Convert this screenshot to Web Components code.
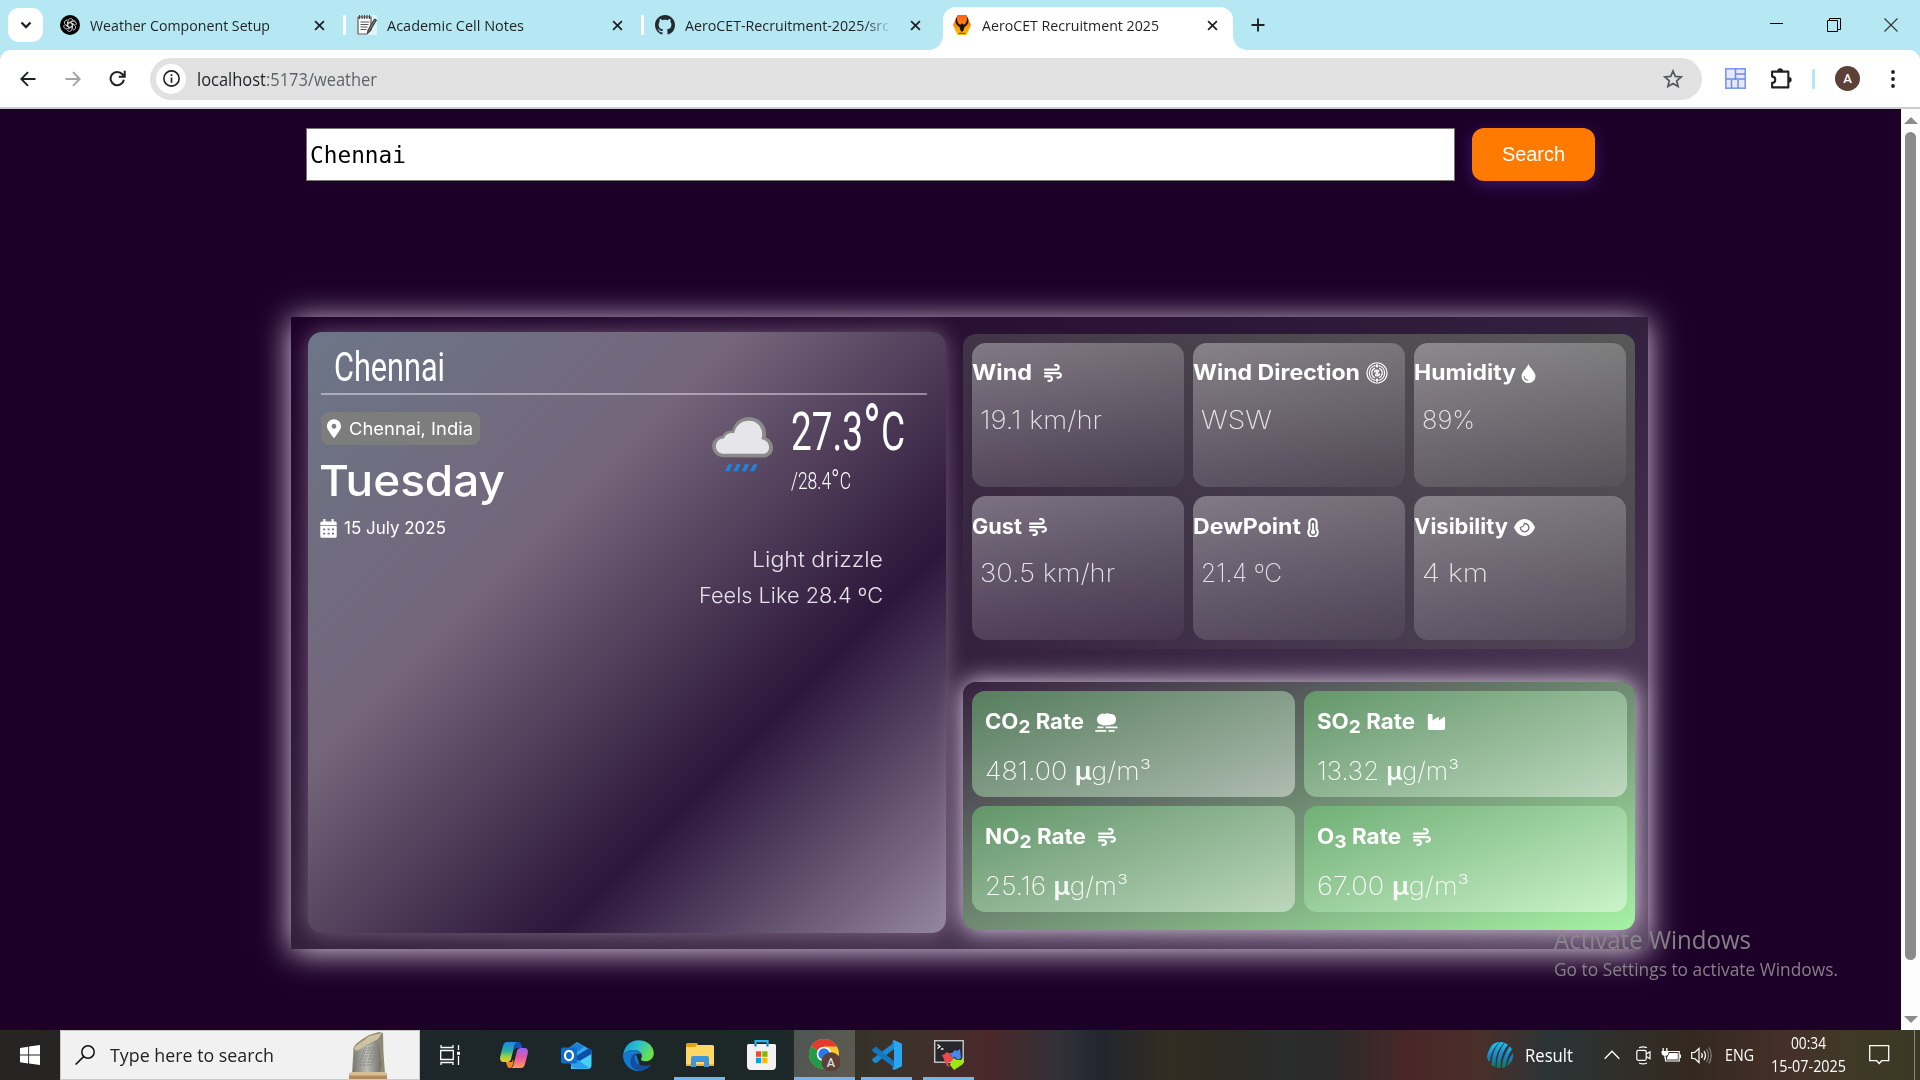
<!DOCTYPE html>
<html lang="en">
<head>
<meta charset="utf-8">
<title>AeroCET Recruitment 2025</title>
<style>
html,body{margin:0;width:1920px;height:1080px;overflow:hidden}
</style>
</head>
<body>
<desk-top></desk-top>
<script>
const WIND='<svg viewBox="0 0 512 512"><path fill="currentColor" d="M288 32c0 17.700 14.300 32 32 32h32c17.700 0 32 14.300 32 32s-14.300 32-32 32H32c-17.700 0-32 14.300-32 32s14.300 32 32 32H352c53 0 96-43 96-96s-43-96-96-96H320c-17.700 0-32 14.300-32 32zm64 352c0 17.700 14.300 32 32 32h32c53 0 96-43 96-96s-43-96-96-96H32c-17.700 0-32 14.300-32 32s14.300 32 32 32H416c17.700 0 32 14.300 32 32s-14.300 32-32 32H384c-17.700 0-32 14.300-32 32zM128 512h32c53 0 96-43 96-96s-43-96-96-96H32c-17.700 0-32 14.300-32 32s14.300 32 32 32H160c17.700 0 32 14.300 32 32s-14.300 32-32 32H128c-17.700 0-32 14.300-32 32s14.300 32 32 32z"/></svg>';
const ICONS={
wind:WIND,
x:'<svg viewBox="0 0 10 10"><path d="M1 1l8 8M9 1l-8 8" stroke="#1f2224" stroke-width="1.600"/></svg>',
plus:'<svg viewBox="0 0 14 14"><path d="M7 .5v13M.5 7h13" stroke="#1f2224" stroke-width="1.900"/></svg>',
chev:'<svg viewBox="0 0 12 8"><path d="M1.500 1.500L6 6l4.500-4.500" fill="none" stroke="#1f2224" stroke-width="2.300"/></svg>',
gpt:'<svg viewBox="0 0 20 20"><circle cx="10" cy="10" r="10" fill="#000"/><g fill="none" stroke="#e8e8e8" stroke-width=".8"><path d="M8 10.800V6.200a2.600 2.600 0 0 1 5-1M8 8.200l3.800-2.200a2.600 2.600 0 0 1 3.600 1"/><path d="M8 10.800V6.200a2.600 2.600 0 0 1 5-1M8 8.200l3.800-2.200" transform="rotate(60 10 10)"/><path d="M8 10.800V6.200a2.600 2.600 0 0 1 5-1M8 8.200l3.800-2.200" transform="rotate(120 10 10)"/><path d="M8 10.800V6.200a2.600 2.600 0 0 1 5-1M8 8.200l3.800-2.200" transform="rotate(180 10 10)"/><path d="M8 10.800V6.200a2.600 2.600 0 0 1 5-1M8 8.200l3.800-2.200" transform="rotate(240 10 10)"/><path d="M8 10.800V6.200a2.600 2.600 0 0 1 5-1M8 8.200l3.800-2.200" transform="rotate(300 10 10)"/></g></svg>',
note:'<svg viewBox="0 0 20 20"><rect width="20" height="20" fill="#fff" opacity=".55"/><path d="M1 2h13v13l-4 4H1z" fill="#fff" stroke="#555" stroke-width="1.200"/><path d="M2.500 0v4M5 0v4M7.500 0v4M10 0v4M12.500 0v4" stroke="#444" stroke-width="1.200"/><path d="M3.500 7h9M3.500 9.500h8M3.500 12h7M3.500 14.500h6" stroke="#555" stroke-width="1.200"/><path d="M17.500 4l2 1-6.500 11-2.500 2 .5-3z" fill="#777" stroke="#222" stroke-width=".9"/></svg>',
github:'<svg viewBox="0 0 16 16"><path fill="#24292f" d="M8 0C3.580 0 0 3.580 0 8c0 3.540 2.290 6.530 5.470 7.590.4.070.55-.17.55-.38 0-.19-.01-.82-.01-1.490-2.010.37-2.530-.49-2.690-.94-.09-.23-.48-.94-.82-1.130-.28-.15-.68-.52-.01-.53.63-.01 1.080.58 1.230.82.72 1.210 1.870.87 2.330.66.070-.52.280-.87.510-1.070-1.780-.2-3.640-.89-3.640-3.950 0-.87.310-1.590.82-2.150-.08-.2-.36-1.020.08-2.120 0 0 .67-.21 2.200.82.64-.18 1.320-.27 2-.27s1.360.09 2 .27c1.530-1.040 2.200-.82 2.200-.82.44 1.100.16 1.920.08 2.120.51.56.82 1.270.82 2.150 0 3.070-1.870 3.750-3.650 3.950.29.25.54.73.54 1.480 0 1.070-.01 1.930-.01 2.200 0 .21.15.46.55.38A8.010 8.010 0 0 0 16 8c0-4.420-3.580-8-8-8z"/></svg>',
aero:'<svg viewBox="0 0 18 20"><defs><linearGradient id="a" x2="0" y2="1"><stop stop-color="#ff5a12"/><stop offset="1" stop-color="#ffc400"/></linearGradient></defs><path d="M4.500 0h9L18 10l-4.500 10h-9L0 10z" fill="url(#a)"/><path d="M4 2C1.500 5 2.500 10 6.500 12L7.500 15.500 9 17l1.500-1.500 1-3.500c4-2 5-7 2.500-10 .3 3-.5 5.500-2.500 7.500L10.200 9.500 9 8 7.800 9.500 6.500 9.500C4.500 7.500 3.700 5 4 2z" fill="#1c1208"/><path d="M5.500 18.300h7" stroke="#5b3a00" stroke-width=".9"/></svg>',
min:'<svg viewBox="0 0 14 14"><path d="M0 5.500h13" stroke="#000" stroke-width="1"/></svg>',
restore:'<svg viewBox="0 0 14 14"><path d="M.5 2.500h10v11H.5zM2.500 2.500v-2h11v11h-3" fill="none" stroke="#000"/></svg>',
close:'<svg viewBox="0 0 14 14"><path d="M.5 .5l13 13M13.500 .5l-13 13" stroke="#333" stroke-width="1.100"/></svg>',
back:'<svg viewBox="0 0 16 16"><path d="M15.500 8H1.500M8 1.200L1.300 8 8 14.800" fill="none" stroke="#1f2224" stroke-width="1.900"/></svg>',
fwd:'<svg viewBox="0 0 16 16"><path d="M.5 8h14M8 1.200L14.700 8 8 14.800" fill="none" stroke="#a3a4a5" stroke-width="1.900"/></svg>',
reload:'<svg viewBox="0 0 16 16"><path d="M14 9.200A6.300 6.300 0 1 1 12.600 4L14.500 6M14.800 .7v5.600H9.200" fill="none" stroke="#1f2224" stroke-width="1.900"/></svg>',
info:'<svg viewBox="0 0 16 16"><circle cx="8" cy="8" r="7.200" fill="none" stroke="#1f2224" stroke-width="1.500"/><path d="M8 7v5M8 4v1.700" stroke="#1f2224" stroke-width="1.600"/></svg>',
star:'<svg viewBox="0 0 20 20"><path d="M10 2l2.300 5.400 5.900.5-4.500 3.900 1.400 5.700L10 14.500l-5.100 3 1.400-5.700L1.800 7.900l5.900-.5z" fill="none" stroke="#55585b" stroke-width="1.700"/></svg>',
grid:'<svg viewBox="0 0 21 21"><rect x=".8" y=".8" width="19.400" height="19.400" fill="#e6e9f8" stroke="#7f97ea" stroke-width="1.600"/><path d="M10.500 1v11M1 11h19M11 6h9M6.500 12v8M13 12v8" stroke="#6f89e4" stroke-width="1.500" fill="none"/></svg>',
puzzle:'<svg viewBox="0 0 21 21"><path d="M2 3.500h15.500v15H2v-4.300c1.800 0 3-1.300 3-3s-1.200-3-3-3z" fill="none" stroke="#1f2224" stroke-width="2" stroke-linejoin="round"/><path d="M7 3a2.700 2.700 0 0 1 5.400 0zM18 8.500a2.700 2.700 0 0 1 0 5.400z" fill="#1f2224"/></svg>',
dots:'<svg viewBox="0 0 4 18"><g fill="#1f2224"><circle cx="2" cy="2" r="1.900"/><circle cx="2" cy="9" r="1.900"/><circle cx="2" cy="16" r="1.900"/></g></svg>',
pin:'<svg viewBox="0 0 384 512"><path fill="#fff" d="M172.268 501.670C26.970 291.031 0 269.413 0 192 0 85.961 85.961 0 192 0s192 85.961 192 192c0 77.413-26.970 99.031-172.268 309.670-9.535 13.774-29.930 13.773-39.464 0zM192 262c38 0 66-30 66-68s-28-66-66-66-66 28-66 66 28 68 66 68z"/></svg>',
cal:'<svg viewBox="0 0 18 20"><path fill="#fff" d="M3.500 0h2.300v2.500h6.400V0h2.300v2.500H16a1.700 1.700 0 0 1 1.700 1.700v2H.3v-2A1.700 1.700 0 0 1 2 2.500h1.500zM.3 7.200h17.400v11A1.700 1.700 0 0 1 16 19.900H2a1.700 1.700 0 0 1-1.700-1.700z"/><g fill="#706b7e"><path d="M3.400 10h2.100v1.900H3.400zM8 10h2.100v1.900H8zM12.600 10h2.100v1.900h-2.100zM3.400 14.500h2.100v1.900H3.400zM8 14.500h2.100v1.900H8zM12.600 14.500h2.100v1.900h-2.100z"/></g></svg>',
cloud:'<svg viewBox="0 0 64 58"><path d="M14 42.500C6 42.500 1.200 37 1.200 31S6 21.500 11.500 20.500C14 16 18 15.500 21.500 15 24 7 30 1.500 38.500 1.500 49 1.500 56 9.500 56 19c0 1.500-.2 2-.4 3C60 24.500 63 28 63 33c0 5.500-4.500 9.800-10.500 9.800z" fill="#8b8b8b"/><path d="M14 39C8 39 5 35.500 5 31.500c0-4.500 3.500-8 8-8 2-4.500 6-6 10.500-5.500C25.500 10 31 5.500 38.500 5.500c8.500 0 13.500 6.500 13.500 14 0 2-.3 3.300-.8 4.600 5.300.9 7.800 4.400 7.800 8.400 0 4.300-3 6.500-7.500 6.500z" fill="#e6e6ea"/><path d="M17.500 49.500h4.200l-3.200 7.200h-4.200zM26 49.500h4.200L27 56.700h-4.200zM34.500 49.500h4.200l-3.200 7.200h-4.200zM43 49.500h4.200L44 56.700h-4.200z" fill="#1e84e0"/></svg>',
maze:'<svg viewBox="0 0 22 22"><g fill="none" stroke="#fff" stroke-width="1.250"><path d="M12.300 .9a10.200 10.200 0 0 1 0 20.200M9.700 21.100a10.200 10.200 0 0 1 0-20.200M12.600 3.500a7.700 7.700 0 0 1 0 15M9.400 18.500a7.700 7.700 0 0 1 0-15M13 6.200a5.200 5.200 0 0 1 0 9.600M9 15.800a5.200 5.200 0 0 1 0-9.600M8.300 10.500c0-2.500 3-3.200 4.500-1.500L9.300 12.800M13.700 11.500c0 2.500-3 3.200-4.500 1.500M9.500 10.500L11 9M12.500 11.500L11 13"/></g><circle cx="11" cy="4.300" r="1.300" fill="#fff"/><circle cx="11" cy="17.700" r="1.300" fill="#fff"/><path d="M10.400 0h1.200v4h-1.200zM10.400 18h1.200v4h-1.200z" fill="#fff"/></svg>',
drop:'<svg viewBox="0 0 15 19"><path d="M7.500 0c1.200 3.800 7 7.800 7 12.200A6.900 6.900 0 0 1 7.500 19a6.900 6.900 0 0 1-7-6.800C.5 7.800 6.300 3.800 7.500 0z" fill="#fff"/><path d="M3.200 12.300c.1 2.200 1.700 3.900 4 4" fill="none" stroke="#777" stroke-width="1.100"/></svg>',
thermo:'<svg viewBox="0 0 12 19"><path d="M2.400 4a3.600 3.600 0 0 1 7.200 0v6.600a4.700 4.700 0 1 1-7.200 0z" fill="none" stroke="#fff" stroke-width="2.200" transform="translate(0 .6)"/><path d="M6 5v8" stroke="#fff" stroke-width="1.800"/><circle cx="6" cy="14" r="2.200" fill="#fff"/></svg>',
eye:'<svg viewBox="0 0 21 17"><path d="M10.500 0C15.500 0 19 4 21 8.500 19 13 15.500 17 10.500 17S2 13 0 8.500C2 4 5.500 0 10.500 0z" fill="#fff"/><path d="M10 4.500A4.200 4.200 0 1 1 6.500 8" fill="none" stroke="#76707a" stroke-width="1.400"/><path d="M10 4.500c.5 2-1 3.700-3.500 3.500" fill="none" stroke="#76707a" stroke-width="1.200"/></svg>',
smog:'<svg viewBox="0 0 23 19"><path d="M6 11.500a5 5 0 0 1-3-8A5 5 0 0 1 9.500 1 6 6 0 0 1 15 1a5 5 0 0 1 6 4.800c.3 3.200-1.800 5.700-4.800 5.700-1 1-2.500 1-3.500.5-2 1-5 .7-6.700-.5z" fill="#fff"/><path d="M2.500 14.300h6M10.500 14.300H22.500M.3 17.800h11M13.500 17.800h6" stroke="#fff" stroke-width="1.700"/></svg>',
factory:'<svg viewBox="0 0 19 17"><path d="M1.500 0h2.800a1 1 0 0 1 1 1v6l5.700-3.800c.5-.3 1 0 1 .6V7l5.400-3.800c.6-.4 1.200 0 1.200.6v11.700a1.500 1.500 0 0 1-1.500 1.500H1.800A1.500 1.500 0 0 1 .3 15.500V1.200C.3.5.8 0 1.500 0z" fill="#fff"/></svg>',
win:'<svg viewBox="0 0 20 20"><path fill="#fff" d="M0 2.900L8.200 1.700v7.900H0zM9.100 1.500L20 0v9.600H9.100zM0 10.500h8.200v7.900L0 17.200zM9.100 10.500H20V20L9.100 18.500z"/></svg>',
mag:'<svg viewBox="0 0 20 20"><circle cx="13" cy="7" r="6.200" fill="none" stroke="#111" stroke-width="1.500"/><path d="M8.600 11.600L.6 19.500" stroke="#111" stroke-width="1.600"/></svg>',
stone:'<svg viewBox="0 0 38 47"><defs><linearGradient id="s" x2="1" y2="0"><stop stop-color="#74746d"/><stop offset=".5" stop-color="#bcbdb8"/><stop offset="1" stop-color="#6e6d66"/></linearGradient></defs><path d="M4.500 16C6 11 14 7 20 3l10-3 4 1 .5 20L36 42H3z" fill="#8f8873"/><path d="M6.500 17c8-1 14-5 20-8l4 5 2 20-1.500 8H3.500z" fill="url(#s)"/><path d="M5 16c4-5 10-7 15-12l13-3-4 6-7 4c-5 2-8 5-15 8z" fill="#cfc2a0"/><path d="M15 16h11M14 18.500h13M13 21h14M12 24h15M11 27h15M10 30h15M10 33h14" stroke="#7b7c76" stroke-width=".7" stroke-dasharray="3 1"/><path d="M0 41.500h38V47H0z" fill="#b18a5c"/><path d="M0 41.500l3-1.500h32l3 1.500v2H0z" fill="#d8bd95"/></svg>',
task:'<svg viewBox="0 0 20 20"><path d="M1 0v2.500h12V0M1 20v-2.500h12V20M.7 5.500h12.600v9H.7zM18.500 0v5M18.500 11v9" fill="none" stroke="#fff" stroke-width="1.300"/><path d="M17 6.800h3v3h-3z" fill="#fff"/></svg>',
copilot:'<svg viewBox="0 0 28 26"><defs><linearGradient id="c1" x2="0" y2="1"><stop stop-color="#1b86e6"/><stop offset=".45" stop-color="#29b29f"/><stop offset=".75" stop-color="#a7cf45"/><stop offset="1" stop-color="#f6c624"/></linearGradient><linearGradient id="c2" x2="0" y2="1"><stop stop-color="#9a62ef"/><stop offset=".5" stop-color="#e9589f"/><stop offset="1" stop-color="#ff9d54"/></linearGradient></defs><path d="M15 0h3.500c2 0 2.800 2 3.300 4l.5 2h-5c-2.500 0-3 1.500-3.500 3.500z" fill="#154fc0"/><path d="M7 0h11c-3 0-3.500 3-4.200 6l-2.500 10c-.7 3-1.800 4-4.300 4H3.500C.5 20-.5 17.500.3 14L3 4c.7-2.500 2-4 4-4z" fill="url(#c1)"/><path d="M21 26H10c3 0 3.500-3 4.200-6l2.500-10c.7-3 1.800-4 4.300-4h3.500c3 0 4 2.500 3.200 6L25 22c-.7 2.500-2 4-4 4z" fill="url(#c2)"/><path d="M6 20h6l1-3 .5 3c-.5 3-1.500 6-4 6-1.800 0-2.500-2-3.500-6z" fill="#f0842b"/></svg>',
outlook:'<svg viewBox="0 0 31 27"><path d="M16 0l13 7.500V12L10 17 5 8z" fill="#35a9ec"/><path d="M5 7.500L16 1l7 4-13 9z" fill="#1b7fd6"/><path d="M10 20L30.500 8v15a4 4 0 0 1-4 4H10z" fill="#48d0f8"/><path d="M9 18L28 6l2.500 2v4L10 24z" fill="#0d4ea8"/><path d="M9 21l8-3 12 8.500H12z" fill="#2b9fe8"/><rect y="5.500" width="16" height="16" rx="2" fill="#0f6cc8"/><ellipse cx="8" cy="13.500" rx="4" ry="4.700" fill="none" stroke="#fff" stroke-width="2.200"/></svg>',
edge:'<svg viewBox="0 0 32 32"><defs><linearGradient id="e1" x1="0" x2="1" y2=".4"><stop stop-color="#1592d4"/><stop offset=".5" stop-color="#2bc0cd"/><stop offset="1" stop-color="#6be04a"/></linearGradient></defs><path d="M.3 14A15.800 15.800 0 0 0 19 31.500L14 16z" fill="#1479cf"/><path d="M.4 14.500C1.500 6 8 .2 16 .2c9 0 15.800 6 15.800 13.500 0 5-3.800 8.300-8.800 8.300-3 0-5.300-1.200-4.300-2.800C21 16 18.500 11 13 10.500 7 10 2.500 12 .4 14.500z" fill="url(#e1)"/><path d="M.4 14.500C2.500 12 7 10 13 10.500c3 .3 5 2 5.800 4-3-1.500-7.300 0-7.800 4.500-1 6 4 12 10 12.200A15.800 15.800 0 0 1 .4 14.500z" fill="#1479cf"/><path d="M12 17.500c-.5 6 4.500 9 10.500 9 3 0 5.300-.8 6.600-1.200-2.500 3.500-6 6.200-12 6.500C11 31.800 7.500 27 7.500 22.500c0-5 3.500-8.500 6.500-8.500-1 .8-1.800 2-2 3.500z" fill="#144f9f"/></svg>',
folder:'<svg viewBox="0 0 28 24"><path d="M0 1.500A1.500 1.500 0 0 1 1.500 0H11l2 3h-2L9 5H0z" fill="#e0a010"/><path d="M0 4h9l2-2h15.500A1.500 1.500 0 0 1 28 3.500V22H0z" fill="#ffd765"/><path d="M0 21h28v2H0z" fill="#f2b430"/><path d="M5 24v-9a2 2 0 0 1 2-2h14a2 2 0 0 1 2 2v9h-5v-5h-8v5z" fill="#3f95dc"/></svg>',
store:'<svg viewBox="0 0 29 30"><path d="M8.500 7V1.200h12V7" fill="none" stroke="#2db4f0" stroke-width="2.200"/><path d="M0 5.500A1.500 1.500 0 0 1 1.500 4h26A1.500 1.500 0 0 1 29 5.500V26a4 4 0 0 1-4 4H4a4 4 0 0 1-4-4z" fill="#f2f2f3"/><path d="M7.400 3.500h2.200v3H7.400zM19.400 3.500h2.200v3h-2.200z" fill="#1480c4"/><path d="M9 11.300h5.200v5.500H9z" fill="#f04f23"/><path d="M15.300 11.300h5.200v5.500h-5.200z" fill="#7eb900"/><path d="M9 17.700h5.200v5.500H9z" fill="#00a3ee"/><path d="M15.300 17.700h5.200v5.500h-5.200z" fill="#feb800"/></svg>',
chrome:'<svg viewBox="0 0 31 32"><circle cx="15" cy="15" r="15" fill="#fdc82f"/><path d="M15 15L2 7.500A15 15 0 0 1 28 7.500H15z" fill="#e33b2e"/><path d="M15 15L2 7.500A15 15 0 0 0 15 30l6-11z" fill="#229a48"/><circle cx="15" cy="15" r="7.300" fill="#fff"/><circle cx="15" cy="15" r="5.700" fill="#2b78ea"/><circle cx="22" cy="23" r="9.700" fill="#5d4037"/><text x="22" y="27.500" text-anchor="middle" font-family="Roboto" font-weight="500" font-size="12.500" fill="#ddd">A</text></svg>',
code:'<svg viewBox="0 0 30 30"><path d="M22 0l-2 4L1 18.500c-1 .8-1 1.700-.3 2.500l2 1.800c.7.6 1.400.5 2 0L22 9z" fill="#1b89d0"/><path d="M22 30l-2-4L1 11.500c-1-.8-1-1.700-.3-2.500l2-1.800c.7-.6 1.400-.5 2 0L22 21z" fill="#1277bd"/><path d="M22 0l7 3.200c.7.3 1 .8 1 1.500v20.600c0 .7-.3 1.200-1 1.500L22 30l-2-2c1 0 2-.3 2-1.500V3.500C22 2.300 21 2 20 2z" fill="#2ba4f2"/></svg>',
moba:'<svg viewBox="0 0 30 30"><rect x=".7" y=".7" width="28.500" height="21.500" fill="#26282c" stroke="#c9c9c9" stroke-width="1.400"/><path d="M3.500 4.500L6 6.500 3.500 8.500M7 9h2.500" stroke="#fff" stroke-width="1.300" fill="none"/><path d="M8 15l3-1 1-2 3 1 3 4 2 2-2 3-3-1-1 3 2 3-3-1z" fill="#f0484a"/><path d="M15 13l3 0 3-3 2 1 3-2 1 9-3 2-3-3-3 1-1-3z" fill="#4b86ee"/><path d="M17 22l3-4 3 2 4 0 2-3v7l-9 6-4-5z" fill="#9be80e"/></svg>',
icc:'<svg viewBox="0 0 26 28"><defs><clipPath id="k"><circle cx="13" cy="14" r="13"/></clipPath><linearGradient id="g" gradientUnits="userSpaceOnUse" x1="0" y1="0" x2="0" y2="28"><stop stop-color="#22c4f4"/><stop offset=".55" stop-color="#1186c8"/><stop offset="1" stop-color="#087c4e"/></linearGradient></defs><g clip-path="url(#k)" stroke="url(#g)" fill="none" stroke-width="3.700"><path d="M13-2C6 4 2 10 1 20"/><path d="M19-3C10 6 6 13 6.500 26"/><path d="M24-3C15 7 11 15 11.500 30"/><path d="M28 2C20 10 16.500 18 16.500 30"/><path d="M31 9C25 15 21.500 21 21.500 30"/></g></svg>',
up:'<svg viewBox="0 0 16 10"><path d="M.7 8.800L8 1.300l7.300 7.500" fill="none" stroke="#fff" stroke-width="1.300"/></svg>',
cam:'<svg viewBox="0 0 15 19"><g fill="none" stroke="#fff" stroke-width="1.200"><rect x=".8" y="4.300" width="9.400" height="10" rx="1.500"/><path d="M10.200 8l3.800-2.200v7L10.200 10.500M3 1.700Q7 0 11 1.700M3 17Q7 18.800 11 17"/></g></svg>',
bat:'<svg viewBox="0 0 20 14"><path d="M7 3.500H18.200v9.500H4.500V9.500" fill="none" stroke="#fff" stroke-width="1.200"/><path d="M8.500 5h8.300v6.600H6V9.500z" fill="#fff"/><path d="M19.400 6.500v3.500" stroke="#fff" stroke-width="1.300"/><path d="M.5 3h7v2a3 3 0 0 1-2.500 2.800H3A3 3 0 0 1 .5 5z" fill="#fff"/><path d="M2.200 0v3M5.800 0v3M4 7v3.500" stroke="#fff" stroke-width="1.300"/></svg>',
vol:'<svg viewBox="0 0 21 17"><path d="M.7 5.500h3L8 1.500v14L3.700 11.500h-3zM10.500 6q1.700 2.500 0 5M13 4q3 4.500 0 9" fill="none" stroke="#fff" stroke-width="1.200"/><path d="M15.500 2q4 6.500 0 13M18 .5q4.500 8 0 16" fill="none" stroke="#888" stroke-width="1.100"/></svg>',
bell:'<svg viewBox="0 0 21 20"><path d="M.7.7h19v15h-7l-2.500 2.800-2.500-2.800h-7z" fill="none" stroke="#fff" stroke-width="1.300"/></svg>'
};
const def=(name,html,init)=>customElements.define(name,class extends HTMLElement{
  constructor(){super();const t=document.createElement('template');t.innerHTML=typeof html==='function'?html(this):html;this.attachShadow({mode:'open'}).append(t.content.cloneNode(true));}
  connectedCallback(){init&&init(this);}
});

def('desk-top',`<style>:host{display:flex;flex-direction:column;width:1920px;height:1080px;position:relative;font-family:"Open Sans","Noto Sans",sans-serif}
.mark{position:absolute;left:1554px;top:921px;color:#8d898e;opacity:.93;display:flex;flex-direction:column}
.mark .a{font-size:25px;line-height:36px}.mark .b{font-size:18px;line-height:24px}</style>
<tab-strip></tab-strip><tool-bar></tool-bar><page-view></page-view><task-bar></task-bar>
<div class="mark"><fit-text class="a" w="197">Activate Windows</fit-text><fit-text class="b" w="284">Go to Settings to activate Windows.</fit-text></div>`);

def('tab-strip',`<style>:host{display:flex;height:50px;background:#b5e8f3;align-items:center;box-sizing:border-box}
.s{width:35px;height:34px;border-radius:11px;background:#fff;margin:0 5px 0 8px;display:flex;align-items:center;justify-content:center}
.sep{width:3px;height:20px;background:#fff;border-radius:1px}
.sp{flex:1}.w{display:flex;gap:43px;padding-right:22px}</style>
<div class="s"><ui-icon n="chev" w="12" h="8"></ui-icon></div>
<browser-tab style="width:295px;--l:12px;--r:18px"><ui-icon slot="i" n="gpt" w="20" h="20"></ui-icon><fit-text w="180">Weather Component Setup</fit-text></browser-tab><div class="sep"></div>
<browser-tab style="width:295px;--l:11px;--r:18px"><ui-icon slot="i" n="note" w="20" h="20"></ui-icon><fit-text w="137">Academic Cell Notes</fit-text></browser-tab><div class="sep"></div>
<browser-tab fade style="width:299px;--l:11px;--r:22px"><ui-icon slot="i" n="github" w="20" h="20"></ui-icon><fit-text w="204">AeroCET-Recruitment-2025/src</fit-text></browser-tab>
<browser-tab active style="width:290px;--l:9px;--r:15px"><ui-icon slot="i" n="aero" w="20" h="20"></ui-icon><fit-text w="177">AeroCET Recruitment 2025</fit-text></browser-tab>
<ui-icon n="plus" w="14" h="14" style="margin-left:18px"></ui-icon><div class="sp"></div>
<div class="w"><ui-icon n="min" w="14" h="14"></ui-icon><ui-icon n="restore" w="14" h="14"></ui-icon><ui-icon n="close" w="14" h="14"></ui-icon></div>`);

def('browser-tab',`<style>:host{display:flex;align-items:center;box-sizing:border-box;height:42px;padding:0 var(--r) 0 var(--l);font-size:14.500px;line-height:20px;color:#1f2224}
:host([active]){align-self:flex-end;height:43px;padding-bottom:7px;background:#fff;border-radius:13px 13px 0 0;position:relative}
:host([active])::before,:host([active])::after{content:"";position:absolute;bottom:0;width:14px;height:14px}
:host([active])::before{left:-14px;background:radial-gradient(circle at 0 0,transparent 13.500px,#fff 14px)}
:host([active])::after{right:-14px;background:radial-gradient(circle at 100% 0,transparent 13.500px,#fff 14px)}
.t{flex:1;margin-left:10px;min-width:0;padding-top:1px}:host([fade]) .t{-webkit-mask:linear-gradient(90deg,#000 180px,transparent 207px)}</style>
<slot name="i"></slot><div class="t"><slot></slot></div><ui-icon n="x" w="11" h="11"></ui-icon>`);

def('tool-bar',`<style>:host{display:block;height:59px;background:#b5e8f3}
.in{display:flex;align-items:center;height:57px;background:#fff;border-radius:11px 11px 0 0;border-bottom:2px solid #c8cccc;padding-left:20px}
.pill{display:flex;align-items:center;height:42px;width:1552px;box-sizing:border-box;border-radius:21px;background:#e1e1e1;padding:0 19px 0 6px;margin-left:24px}
.c{width:30px;height:30px;border-radius:50%;background:#fff;display:flex;align-items:center;justify-content:center;margin-right:11px}
fit-text{font-size:18.500px;line-height:27px;color:#1f2224}fit-text i{font-style:normal;color:#5f6366}.f{flex:1}
.d{width:3px;height:20px;background:#b5e8f3;margin:0 20px 0 20px;border-radius:1px}
.av{width:25px;height:25px;border-radius:50%;background:#5d4037;color:#fff;font:500 13px/25px Roboto,sans-serif;text-align:center;margin-right:31px}</style>
<div class="in"><ui-icon n="back" w="16" h="16"></ui-icon><ui-icon n="fwd" w="16" h="16" style="margin-left:29px"></ui-icon><ui-icon n="reload" w="17" h="17" style="margin-left:28px"></ui-icon>
<div class="pill"><div class="c"><ui-icon n="info" w="17" h="17"></ui-icon></div><fit-text w="180">localhost<i>:5173/weather</i></fit-text><div class="f"></div><ui-icon n="star" w="20" h="20"></ui-icon></div>
<ui-icon n="grid" w="21" h="21" style="margin-left:23px"></ui-icon><ui-icon n="puzzle" w="22" h="22" style="margin-left:24px"></ui-icon><div class="d"></div><div class="av">A</div><ui-icon n="dots" w="4" h="18"></ui-icon></div>`);

def('page-view',`<style>:host{display:flex;height:921px;background:#1d0028}
.p{width:1901px;overflow:hidden;display:flex;flex-direction:column}
.row{display:flex;margin:19px 0 0 306px;height:53px}
.inp{box-sizing:border-box;width:1149px;border:1.500px solid #777;background:#fff;color:#000;padding-left:3px;font-family:"DejaVu Sans Mono",monospace;font-size:23px;line-height:52px}
.btn{width:123px;margin-left:17px;border-radius:12px;background:#ff7a00;color:#fff;display:flex;justify-content:center;font:20.500px/52px "Liberation Sans",sans-serif;box-shadow:0 4px 15px rgba(82,44,160,.55)}
.bar{width:19px;background:#fcfcfc;display:flex;flex-direction:column;align-items:center}
.u,.d{border:7px solid transparent;width:0;height:0;box-sizing:border-box}.u{border-bottom:7px solid #8b8b8b;border-top:0;margin-top:8px}
.d{border-top:7px solid #8b8b8b;border-bottom:0;margin-top:56px}.th{width:11px;height:828px;border-radius:6px;background:#8b8b8b;margin-top:8px}</style>
<div class="p"><div class="row"><div class="inp"><fit-text w="96">Chennai</fit-text></div><div class="btn"><fit-text w="63">Search</fit-text></div></div><weather-board></weather-board></div>
<div class="bar"><div class="u"></div><div class="th"></div><div class="d"></div></div>`);

def('weather-board',`<style>:host{display:flex;box-sizing:border-box;width:1357px;height:632px;margin:136px 0 0 291px;padding:15px 13px 16px 17px;gap:17px;background:linear-gradient(to bottom right,#1d0028,#33203e 50%,#5a4764);box-shadow:0 3px 30px rgba(240,228,245,.92);color:#fff;font-family:Inter,Lato,sans-serif}
.r{display:flex;flex-direction:column;width:672px;padding-top:2px}
.m{box-sizing:border-box;height:315px;padding:9px;border-radius:13px;display:grid;grid-template-columns:repeat(3,212px);grid-template-rows:144px 144px;gap:9px;background:linear-gradient(to top right,rgba(52,29,64,0),#585858)}
.g{box-sizing:border-box;height:248px;margin-top:33px;padding:9px;border-radius:13px;display:grid;grid-template-columns:322.500px 323px;grid-template-rows:106px 106px;gap:9px;background:linear-gradient(to bottom right,#38213f,#a5f3a4);box-shadow:0 0 24px rgba(240,225,245,.95)}</style>
<today-card></today-card><div class="r"><div class="m">
<stat-cell tw="60" vw="122" i="wind" iw="20" ih="18" gap="11"><span slot="t">Wind</span>19.1 km/hr</stat-cell>
<stat-cell tw="167" vw="71" i="maze" iw="22" ih="22" gap="6"><span slot="t">Wind Direction</span>WSW</stat-cell>
<stat-cell tw="102" vw="53" i="drop" iw="15" ih="19" gap="5"><span slot="t">Humidity</span>89%</stat-cell>
<stat-cell low tw="50" vw="135" i="wind" iw="20" ih="18" gap="6"><span slot="t">Gust</span>30.5 km/hr</stat-cell>
<stat-cell low tw="108" vw="81" i="thermo" iw="12" ih="19" gap="6"><span slot="t">DewPoint</span>21.4 ºC</stat-cell>
<stat-cell low tw="94" vw="66" i="eye" iw="21" ih="17" gap="6"><span slot="t">Visibility</span>4 km</stat-cell>
</div><div class="g">
<stat-cell green tw="99" vw="166" i="smog" iw="23" ih="19" gap="11"><span slot="t">CO<sub>2</sub> Rate</span>481.00 <b>µ</b>g/m³</stat-cell>
<stat-cell green tw="98" vw="142" i="factory" iw="19" ih="16" gap="12"><span slot="t">SO<sub>2</sub> Rate</span>13.32 <b>µ</b>g/m³</stat-cell>
<stat-cell green tw="101" vw="143" i="wind" iw="20" ih="18" gap="11"><span slot="t">NO<sub>2</sub> Rate</span>25.16 <b>µ</b>g/m³</stat-cell>
<stat-cell green tw="84" vw="152" i="wind" iw="20" ih="18" gap="11"><span slot="t">O<sub>3</sub> Rate</span>67.00 <b>µ</b>g/m³</stat-cell>
</div></div>`);

def('stat-cell',e=>{const a=k=>e.getAttribute(k);const t=e.querySelector('span').innerHTML;const v=e.innerHTML.replace(/<span.*<\/span>/,'');return `<style>:host{display:block;border-radius:14px;background:linear-gradient(160deg,rgba(255,255,255,.34),rgba(255,255,255,.03))}
:host([green]){padding-left:13px;border-radius:13px;background:linear-gradient(160deg,rgba(113,212,121,.5),rgba(255,255,255,.45))}
.t{display:flex;align-items:center;padding-top:15px;height:30px;gap:${a('gap')}px}.t fit-text{font-size:21px;line-height:30px;font-weight:750}
:host([low]) .t,:host([green]) .t{padding-top:16px}:host([low]) .v{margin-top:11px}
.v{font-size:25.500px;line-height:40px;font-weight:200;margin:12px 0 0 8px;color:#eee;opacity:.93}:host([green]) .v{margin:14px 0 0;color:#fff;font-weight:150}
b{font-weight:600}sub{font-size:18px;line-height:0;vertical-align:baseline;position:relative;top:4px}</style>
<div class="t"><fit-text w="${a('tw')}">${t}</fit-text><ui-icon n="${a('i')}" w="${a('iw')}" h="${a('ih')}"></ui-icon></div><fit-text class="v" w="${a('vw')}">${v}</fit-text>`});

def('today-card',`<style>:host{display:block;box-sizing:border-box;width:638px;height:601px;border-radius:14px;padding:15px 19px 0 13px;background:linear-gradient(135deg,#6c7688,#74657a 35%,#2c163a 68.500%,#9486a0);box-shadow:0 0 22px rgba(205,175,205,.45)}
.n{font:40px/40px Roboto,sans-serif;margin-left:13px;padding-top:1px}.hr{height:2px;background:rgba(255,255,255,.42);margin-top:5px}
.b{display:flex;justify-content:space-between}.l{display:flex;flex-direction:column;align-items:flex-start}
.bd{display:flex;align-items:center;height:33px;box-sizing:border-box;width:159px;margin-top:17px;border-radius:8px;background:#7d7d7d;padding-left:6px;gap:8px;font-size:17.500px;line-height:30px}
.day{font-size:43px;line-height:50px;font-weight:500;margin:10px 0 0 -2px}.dt{display:flex;align-items:center;gap:7px;margin-top:11px;margin-left:-1px;font-size:17.500px;line-height:24px}
.r{width:228px;display:flex;flex-direction:column}.w{display:flex;gap:17px;padding:6px 0 0 12px}
.c{font:54px/60px Roboto,sans-serif;margin-top:1px}.f{font:300 24px/30px Roboto,sans-serif;margin-top:4px}
i{font-style:normal;font-size:1.3em;line-height:0;position:relative;top:.06em}
.ds{display:flex;flex-direction:column;align-items:flex-end;margin:45px 44px 0 0;font-size:21.500px;line-height:36px;font-weight:300;color:#e6e0ea}</style>
<fit-text class="n" w="111">Chennai</fit-text><div class="hr"></div><div class="b"><div class="l">
<div class="bd"><ui-icon n="pin" w="14" h="19"></ui-icon><fit-text w="124">Chennai, India</fit-text></div>
<fit-text class="day" w="186">Tuesday</fit-text><div class="dt"><ui-icon n="cal" w="17" h="19"></ui-icon><fit-text w="102">15 July 2025</fit-text></div></div>
<div class="r"><div class="w"><ui-icon n="cloud" w="63" h="58" style="margin-top:14px"></ui-icon><div><fit-text class="c" w="114">27.3<i>°</i>C</fit-text><fit-text class="f" w="60">/28.4<i>°</i>C</fit-text></div></div>
<div class="ds"><fit-text w="131">Light drizzle</fit-text><fit-text w="184">Feels Like 28.4 ºC</fit-text></div></div></div>`);

def('task-bar',`<style>:host{display:flex;height:50px;align-items:center;background:linear-gradient(90deg,#262523 0,#252423 60px,#1d2628 430px,#1c2728 780px,#38332a 870px,#40302b 930px,#4a2829 990px,#32313a 1060px,#23262f 1100px,#322c22 1170px,#2c2a24 1230px,#2b2c2c 1280px,#2b2a2b 1330px,#4a2628 1410px,#4a2f2a 1480px,#2b3436 1550px,#34291f 1690px,#45302a 1790px,#403927 1840px,#3a3924 1920px);color:#fff}
.win{width:60px;display:flex;justify-content:center}.s{box-sizing:border-box;width:360px;height:50px;background:#f1f1f1;border:1px solid #c9c9c9;display:flex;align-items:center;padding:0 32px 0 14px;color:#222;font-size:19px;line-height:28px}
.s fit-text{margin-left:15px}.s ui-icon:last-child{align-self:flex-end;margin-left:auto}
.a{width:62px;height:50px;display:flex;align-items:center;justify-content:center;box-sizing:border-box}
.o{border-bottom:3px solid #76b5ec;width:51px;padding-top:3px}.on{width:61px;background:linear-gradient(120deg,#4d5553,#5f5b50)}
.sp{flex:1}.t{font-size:18px;line-height:24px}.q{font-size:16px;line-height:23px}.ck{display:flex;flex-direction:column;align-items:center;gap:0;width:76px}.end{width:1px;height:50px;background:#8a8a80;margin:0 5px 0 24px}</style>
<div class="win"><ui-icon n="win" w="20" h="20"></ui-icon></div><div class="s"><ui-icon n="mag" w="20" h="20"></ui-icon><fit-text w="164">Type here to search</fit-text><ui-icon n="stone" w="38" h="47"></ui-icon></div>
<div class="a" style="width:60px"><ui-icon n="task" w="20" h="20"></ui-icon></div><div class="a" style="width:68px"><ui-icon n="copilot" w="28" h="26"></ui-icon></div><div class="a" style="width:56px"><ui-icon n="outlook" w="31" h="27"></ui-icon></div><div class="a" style="width:68px"><ui-icon n="edge" w="31" h="31"></ui-icon></div>
<div class="a o" style="margin-left:2px"><ui-icon n="folder" w="28" h="24"></ui-icon></div><div class="a" style="width:73px"><ui-icon n="store" w="29" h="30"></ui-icon></div><div class="a o on" style="margin-left:-4px"><ui-icon n="chrome" w="31" h="32"></ui-icon></div><div class="a o" style="margin-left:6px"><ui-icon n="code" w="30" h="30"></ui-icon></div><div class="a o" style="margin-left:11px"><ui-icon n="moba" w="30" h="30"></ui-icon></div>
<div class="sp"></div><ui-icon n="icc" w="26" h="28"></ui-icon><fit-text class="t" w="48" style="margin:0 31px 0 12px">Result</fit-text><ui-icon n="up" w="16" h="10"></ui-icon><ui-icon n="cam" w="15" h="19" style="margin-left:16px"></ui-icon><ui-icon n="bat" w="20" h="14" style="margin-left:10px"></ui-icon><ui-icon n="vol" w="21" h="17" style="margin-left:10px"></ui-icon><fit-text class="q" w="29" style="margin:0 16px 0 13px">ENG</fit-text>
<div class="ck"><fit-text class="q" w="35">00:34</fit-text><fit-text class="q" w="75">15-07-2025</fit-text></div><ui-icon n="bell" w="21" h="20" style="margin-left:23px"></ui-icon><div class="end"></div>`);

def('ui-icon',e=>`<style>:host{display:block;flex:none;width:${e.getAttribute('w')}px;height:${e.getAttribute('h')}px}svg{display:block;width:100%;height:100%}</style>${ICONS[e.getAttribute('n')]}`);

/* Text run scaled horizontally to the width given in its "w" attribute. */
def('fit-text','<style>:host{display:block;white-space:nowrap;box-sizing:content-box}span{display:inline-block;transform-origin:0 50%}</style><span><slot></slot></span>',e=>{
  const w=+e.getAttribute('w'),s=e.shadowRoot.querySelector('span');
  const nat=s.getBoundingClientRect().width;
  e.style.width=w+'px';
  s.style.transform=`scaleX(${w/nat})`;
});
</script>
</body>
</html>
